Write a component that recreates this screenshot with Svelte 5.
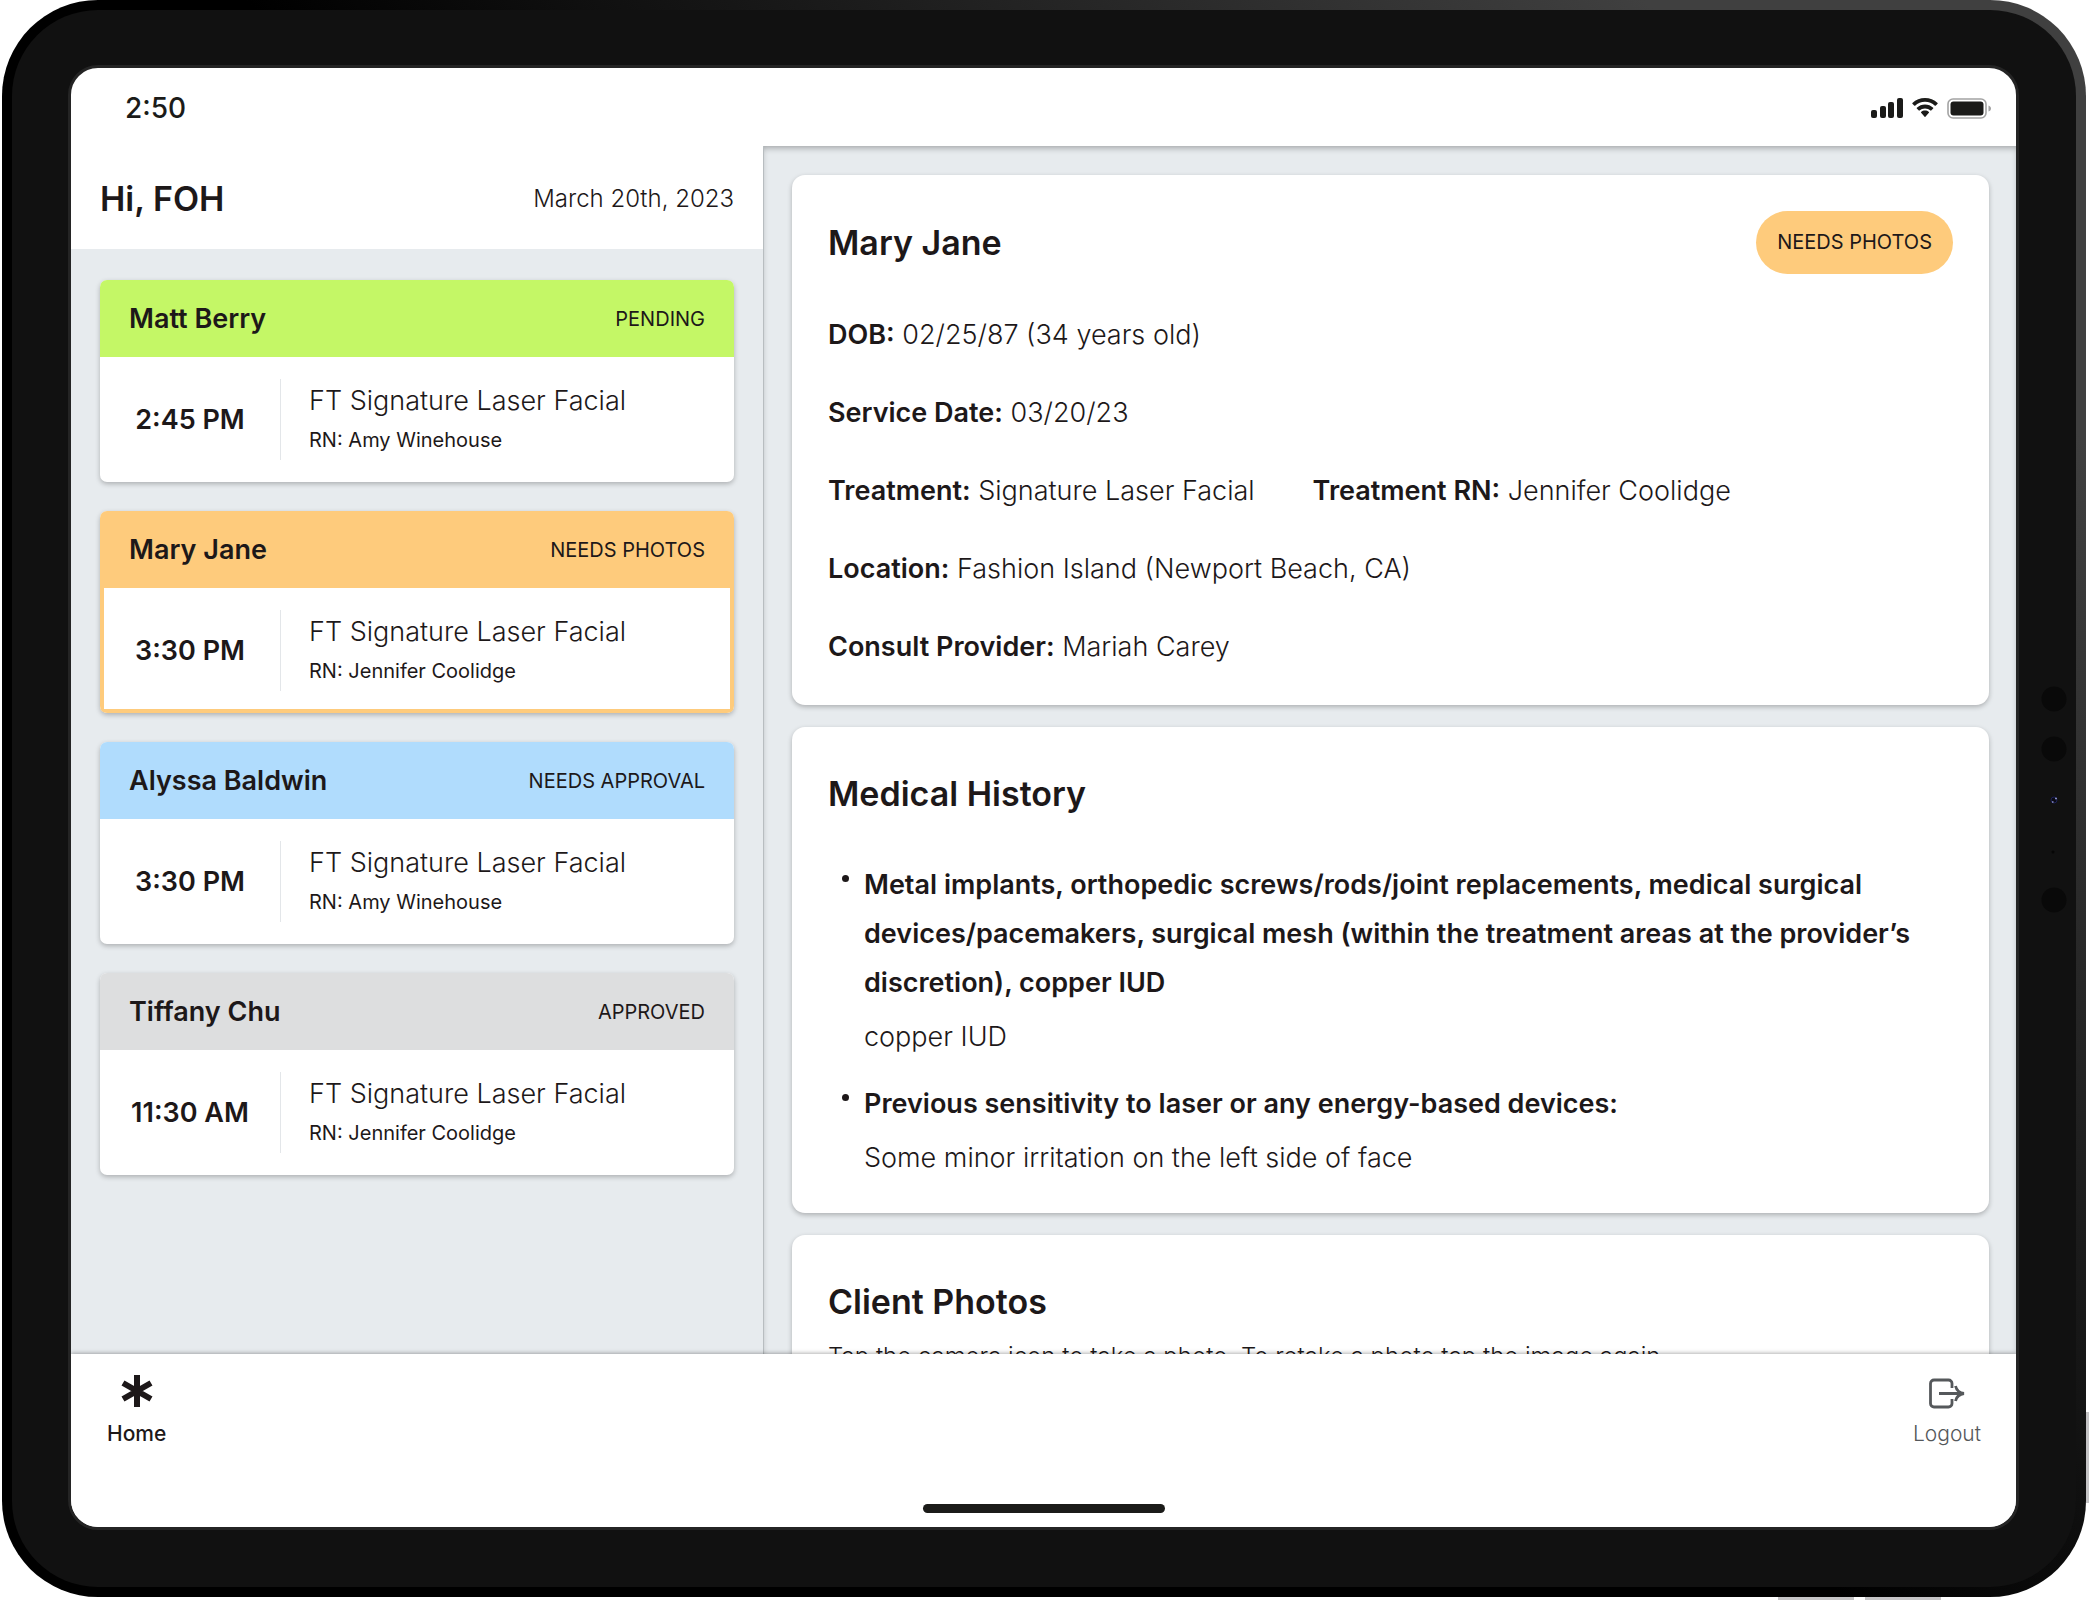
<script lang="ts">
	type Status = 'pending' | 'photos' | 'approval' | 'approved';

	interface Appointment {
		id: number;
		name: string;
		status: Status;
		time: string;
		service: string;
		nurse: string;
	}

	const statusLabels: Record<Status, string> = {
		pending: 'PENDING',
		photos: 'NEEDS PHOTOS',
		approval: 'NEEDS APPROVAL',
		approved: 'APPROVED'
	};

	const appointments: Appointment[] = [
		{ id: 1, name: 'Matt Berry', status: 'pending', time: '2:45 PM', service: 'FT Signature Laser Facial', nurse: 'Amy Winehouse' },
		{ id: 2, name: 'Mary Jane', status: 'photos', time: '3:30 PM', service: 'FT Signature Laser Facial', nurse: 'Jennifer Coolidge' },
		{ id: 3, name: 'Alyssa Baldwin', status: 'approval', time: '3:30 PM', service: 'FT Signature Laser Facial', nurse: 'Amy Winehouse' },
		{ id: 4, name: 'Tiffany Chu', status: 'approved', time: '11:30 AM', service: 'FT Signature Laser Facial', nurse: 'Jennifer Coolidge' }
	];

	const details = [
		[{ label: 'DOB', value: '02/25/87 (34 years old)' }],
		[{ label: 'Service Date', value: '03/20/23' }],
		[
			{ label: 'Treatment', value: 'Signature Laser Facial' },
			{ label: 'Treatment RN', value: 'Jennifer Coolidge' }
		],
		[{ label: 'Location', value: 'Fashion Island (Newport Beach, CA)' }],
		[{ label: 'Consult Provider', value: 'Mariah Carey' }]
	];

	const history = [
		{
			question:
				'Metal implants, orthopedic screws/rods/joint replacements, medical surgical devices/pacemakers, surgical mesh (within the treatment areas at the provider’s discretion), copper IUD',
			answer: 'copper IUD'
		},
		{
			question: 'Previous sensitivity to laser or any energy-based devices:',
			answer: 'Some minor irritation on the left side of face'
		}
	];

	let selectedId = $state(2);
</script>

<div class="stage">
	<div class="device">
		<div class="bezel">
			<div class="screen">
				<header class="status-bar">
					<span class="clock">2:50</span>
					<div class="indicators">
						<svg width="32" height="20" viewBox="0 0 32 20" aria-hidden="true">
							<rect x="0" y="12" width="6" height="8" rx="2" />
							<rect x="9" y="8" width="6" height="12" rx="2" />
							<rect x="17" y="4" width="6" height="16" rx="2" />
							<rect x="26" y="0" width="6" height="20" rx="2" />
						</svg>
						<svg width="28" height="20" viewBox="0 0 28 20" aria-hidden="true">
							<path d="M14 3.8c3.8 0 7.300 1.500 9.900 3.900.2.2.5.2.7 0l2-2c.2-.2.2-.6 0-.8C23.200 1.700 18.700 0 14 0S4.800 1.700 1.400 4.900c-.2.2-.2.6 0 .8l2 2c.2.2.5.2.7 0C6.700 5.300 10.200 3.800 14 3.800z" />
							<path d="M14 10.400c2.100 0 4 .8 5.500 2.100.2.2.5.2.7 0l2-2c.2-.2.2-.6 0-.8-2.200-2.100-5.100-3.300-8.200-3.300s-6 1.200-8.200 3.300c-.2.2-.2.6 0 .8l2 2c.2.2.5.2.7 0 1.500-1.300 3.400-2.100 5.500-2.100z" />
							<path d="M17.900 14.800c.2-.2.2-.6 0-.8-1.100-.9-2.500-1.400-3.900-1.400s-2.800.5-3.900 1.400c-.2.2-.2.600 0 .8l3.500 3.900c.2.3.6.3.8 0z" />
						</svg>
						<svg width="44" height="21" viewBox="0 0 44 21" aria-hidden="true">
							<rect x="1" y="1" width="38" height="19" rx="5" fill="none" stroke="#a3a3a3" stroke-width="1.600" />
							<rect x="3.500" y="3.500" width="33" height="14" rx="3" />
							<path d="M41.500 7.500c1.500.5 2.500 1.500 2.500 3s-1 2.500-2.500 3z" fill="#a3a3a3" />
						</svg>
					</div>
				</header>

				<main class="panes">
					<section class="schedule">
						<div class="greeting">
							<h1>Hi, FOH</h1>
							<time datetime="2023-03-20">March 20th, 2023</time>
						</div>
						<div class="appointments">
							{#each appointments as appt (appt.id)}
								<button
									type="button"
									class="appointment {appt.status}"
									class:selected={appt.id === selectedId}
									onclick={() => (selectedId = appt.id)}
								>
									<span class="appointment-head">
										<span class="client">{appt.name}</span>
										<span class="status">{statusLabels[appt.status]}</span>
									</span>
									<span class="appointment-body">
										<span class="time">{appt.time}</span>
										<span class="info">
											<span class="service">{appt.service}</span>
											<span class="nurse">RN: {appt.nurse}</span>
										</span>
									</span>
								</button>
							{/each}
						</div>
					</section>

					<section class="chart">
						<article class="card">
							<div class="card-head">
								<h2>Mary Jane</h2>
								<span class="badge">{statusLabels.photos}</span>
							</div>
							<div class="details">
								{#each details as row}
									<div class="row">
										{#each row as item}
											<p><strong>{item.label}:</strong> {item.value}</p>
										{/each}
									</div>
								{/each}
							</div>
						</article>

						<article class="card">
							<h2>Medical History</h2>
							<ul class="history">
								{#each history as entry}
									<li>
										<div>
											<strong>{entry.question}</strong>
											<p>{entry.answer}</p>
										</div>
									</li>
								{/each}
							</ul>
						</article>

						<article class="card">
							<h2>Client Photos</h2>
							<p class="hint">Tap the camera icon to take a photo. To retake a photo tap the image again.</p>
						</article>
					</section>
				</main>

				<nav class="tab-bar">
					<div class="tabs">
						<a class="tab active" href="#home">
							<svg width="36" height="36" viewBox="0 0 36 36" aria-hidden="true">
								<path d="M18 2v32M4 10l28 16M32 10L4 26" fill="none" stroke="currentColor" stroke-width="6" />
							</svg>
							Home
						</a>
						<button type="button" class="tab">
							<svg width="36" height="36" viewBox="0 0 36 36" fill="none" stroke="currentColor" stroke-width="2.800" aria-hidden="true">
								<path d="M23 15v-4.500a3.500 3.500 0 0 0-3.500-3.500H5a3.500 3.500 0 0 0-3.500 3.500v20A3.500 3.500 0 0 0 5 34h14.500a3.500 3.500 0 0 0 3.500-3.500V26" />
								<path d="M10 20.500h25M26.500 13c1 4 4 7 8.500 7.500-4.500.5-7.500 3.500-8.500 7.500" />
							</svg>
							Logout
						</button>
					</div>
					<div class="home-indicator"></div>
				</nav>
			</div>
		</div>

		<svg class="sensors" width="26" height="228" viewBox="0 0 26 228" aria-hidden="true">
			<circle cx="13" cy="13" r="12.500" fill="#090909" />
			<circle cx="13" cy="63" r="12.500" fill="#090909" />
			<circle cx="13" cy="114" r="3" fill="#0a0a14" stroke="#1b1f55" />
			<path d="M11 116h1.500M14 112.500h2" stroke="#8a90c8" stroke-width="1.600" />
			<circle cx="12" cy="166" r="1.500" fill="#060606" />
			<circle cx="13" cy="214" r="12.500" fill="#090909" />
		</svg>
		<span class="side-key power"></span>
		<span class="side-key volume-up"></span>
		<span class="side-key volume-down"></span>
	</div>
</div>

<style>
	:global(body) {
		background: #fff;
	}

	.stage {
		box-sizing: border-box;
		height: 100vh;
		padding: 0 3px 3px 2px;
		font-family: Inter, 'Liberation Sans', sans-serif;
		font-size: 27px;
		font-weight: 300;
		color: #1d1819;
	}

	.stage :global(*) {
		box-sizing: border-box;
	}

	h1,
	h2,
	p,
	ul {
		margin: 0;
	}

	h1,
	h2 {
		font-size: 34px;
		line-height: 40px;
		font-weight: 600;
	}

	strong {
		font-weight: 600;
	}

	button {
		font: inherit;
		color: inherit;
		border: none;
		padding: 0;
		background: none;
		cursor: pointer;
	}

	.device {
		position: relative;
		height: 100%;
		padding: 10px;
		border-radius: 96px;
		background: linear-gradient(45deg, #000 50%, #404040 88%);
	}

	.bezel {
		height: 100%;
		padding: 55px 57px 57px 56px;
		border-radius: 86px;
		background: #111;
	}

	.screen {
		display: flex;
		flex-direction: column;
		height: 100%;
		border: 3px solid #242424;
		border-radius: 30px;
		background: #fff;
		overflow: hidden;
	}

	/* status bar */

	.status-bar {
		flex: none;
		display: flex;
		align-items: center;
		justify-content: space-between;
		height: 78px;
		padding: 2px 25px 0 54px;
		color: #1b1b19;
	}

	.clock {
		font-size: 28px;
		font-weight: 500;
	}

	.indicators {
		display: flex;
		align-items: center;
		gap: 8px;
		fill: currentColor;
	}

	/* panes */

	.panes {
		flex: 1;
		min-height: 0;
		display: grid;
		grid-template-columns: 693px 1fr;
	}

	.schedule {
		display: flex;
		flex-direction: column;
		background: #e7ebee;
		border-right: 1px solid #b8bdc0;
	}

	.greeting {
		display: flex;
		align-items: center;
		justify-content: space-between;
		height: 103px;
		padding: 2px 29px 0;
		background: #fff;
	}

	.greeting time {
		font-size: 24px;
	}

	.appointments {
		display: flex;
		flex-direction: column;
		gap: 29px;
		padding: 31px 29px;
	}

	.appointment {
		display: flex;
		flex-direction: column;
		height: 202px;
		border-radius: 7px;
		background: #fff;
		box-shadow: 0 2px 5px rgba(0, 0, 0, 0.25);
		text-align: left;
		overflow: hidden;
	}

	.appointment-head {
		display: flex;
		align-items: center;
		justify-content: space-between;
		width: 100%;
		height: 77px;
		padding: 0 29px;
	}

	.pending .appointment-head {
		background: #c4f766;
	}

	.photos .appointment-head {
		background: #fecb7c;
	}

	.approval .appointment-head {
		background: #b0dcfd;
	}

	.approved .appointment-head {
		background: #dddedf;
	}

	.client,
	.time {
		font-weight: 600;
	}

	.status,
	.badge,
	.nurse {
		font-size: 20px;
		font-weight: 400;
	}

	.appointment-body {
		flex: 1;
		display: flex;
		align-items: center;
		width: 100%;
	}

	.selected .appointment-body {
		box-shadow:
			inset 4px 0 #fecb7c,
			inset -4px 0 #fecb7c,
			inset 0 -4px #fecb7c;
	}

	.time {
		width: 181px;
		line-height: 81px;
		border-right: 1px solid #e3e6e9;
		text-align: center;
	}

	.info {
		display: flex;
		flex-direction: column;
		gap: 4px;
		padding-left: 28px;
	}

	.service {
		line-height: 36px;
	}

	.nurse {
		line-height: 34px;
	}

	/* client chart */

	.chart {
		display: flex;
		flex-direction: column;
		gap: 22px;
		padding: 29px 27px 0 28px;
		background: #e7ebee;
		box-shadow: inset 0 4px 6px -2px rgba(0, 0, 0, 0.3);
		overflow-y: auto;
		scrollbar-width: none;
	}

	.card {
		flex: none;
		padding: 36px 36px 30px;
		border-radius: 13px;
		background: #fff;
		box-shadow: 0 2px 5px rgba(0, 0, 0, 0.25);
	}

	.card > h2 {
		padding: 11px 0;
	}

	.card-head {
		display: flex;
		align-items: center;
		justify-content: space-between;
		height: 63px;
	}

	.badge {
		padding: 0 21px;
		border-radius: 32px;
		background: #fecb7c;
		line-height: 63px;
	}

	.details {
		display: flex;
		flex-direction: column;
		gap: 38px;
		padding: 41px 0 8px;
	}

	.row {
		display: flex;
		gap: 58px;
		line-height: 40px;
	}

	.history {
		display: flex;
		flex-direction: column;
		gap: 18px;
		padding: 35px 0 1px 14px;
		line-height: 49px;
		list-style: none;
	}

	.history li {
		display: flex;
		gap: 15px;
	}

	.history li::before {
		content: '';
		flex: none;
		width: 7px;
		height: 7px;
		margin-top: 15px;
		border-radius: 50%;
		background: #1d1819;
	}

	.history strong {
		display: block;
	}

	.history p {
		padding-top: 5px;
	}

	.hint {
		padding-top: 8px;
		font-size: 24px;
		line-height: 32px;
	}

	/* tab bar */

	.tab-bar {
		position: relative;
		flex: none;
		display: flex;
		flex-direction: column;
		align-items: center;
		justify-content: space-between;
		height: 173px;
		padding-bottom: 14px;
		background: #fff;
		box-shadow: 0 -1px 4px rgba(0, 0, 0, 0.3);
	}

	.tabs {
		display: flex;
		justify-content: space-between;
		width: 100%;
		padding: 19px 35px 0 36px;
	}

	.tab {
		display: flex;
		flex-direction: column;
		align-items: center;
		gap: 10px;
		font-size: 21px;
		line-height: 30px;
		color: #55585b;
		text-decoration: none;
	}

	.tab.active {
		font-weight: 500;
		color: #1d1819;
	}

	.home-indicator {
		width: 242px;
		height: 9px;
		border-radius: 5px;
		background: #1b1b19;
	}

	/* hardware */

	.sensors {
		position: absolute;
		right: 19px;
		top: calc(50% - 113px);
	}

	.side-key {
		position: absolute;
		background: #c5c4c6;
	}

	.power {
		right: -3px;
		bottom: 94px;
		width: 3px;
		height: 91px;
	}

	.volume-up,
	.volume-down {
		bottom: -3px;
		width: 76px;
		height: 3px;
	}

	.volume-up {
		right: 232px;
	}

	.volume-down {
		right: 145px;
	}
</style>
